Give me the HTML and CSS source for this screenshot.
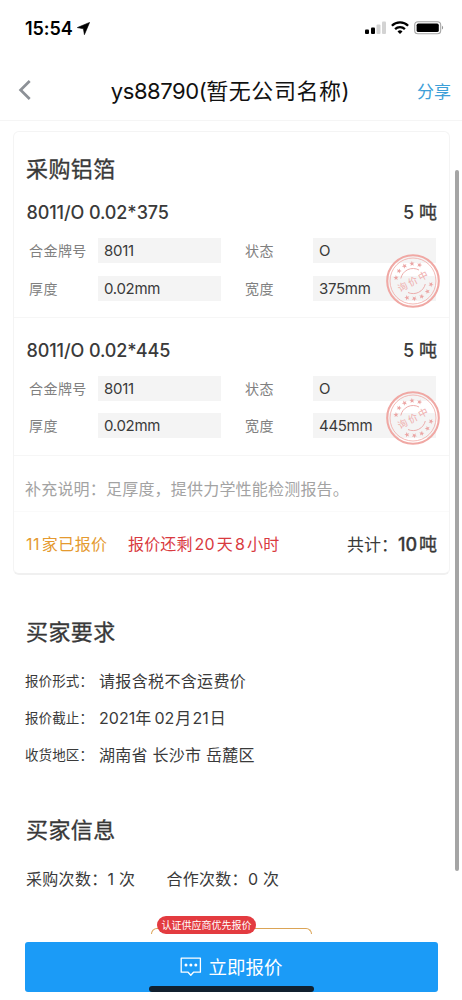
FILE: index.html
```
<!DOCTYPE html>
<html lang="zh-CN">
<head>
<meta charset="utf-8">
<title>采购铝箔</title>
<link rel="stylesheet" href="styles.css">
</head>
<body>
<svg class="defs" width="0" height="0">
  <defs>
    <path id="star" d="M0-2.7 .7-.85 2.6-.85 1.1.35 1.6 2.2 0 1.1-1.6 2.2-1.1.35-2.6-.85-.7-.85Z"/>
    <g id="stamp">
      <circle cx="27" cy="27" r="25.8" fill="none" stroke="#f0a8a4" stroke-width="2.1"/>
      <circle cx="27" cy="27" r="23" fill="none" stroke="#f0a8a4" stroke-width=".8"/>
      <g fill="#eba5a4">
        <use href="#star" transform="translate(10 23.8) rotate(-75)"/>
        <use href="#star" transform="translate(13 17) rotate(-52)"/>
        <use href="#star" transform="translate(18.5 12) rotate(-28)"/>
        <use href="#star" transform="translate(26 9.6) rotate(-5)"/>
        <use href="#star" transform="translate(33.5 11) rotate(20)"/>
        <use href="#star" transform="translate(45 30.5) rotate(100)"/>
        <use href="#star" transform="translate(41.5 37.5) rotate(125)"/>
        <use href="#star" transform="translate(35.7 42.5) rotate(150)"/>
        <use href="#star" transform="translate(28.3 44.6) rotate(175)"/>
        <use href="#star" transform="translate(21 43.7) rotate(200)"/>
      </g>
      <path d="M14.8 24.5A12.5 12.5 0 0 1 33 16M22 38.5A12.5 12.5 0 0 0 39.3 30" fill="none" stroke="#eba5a4" stroke-width=".9"/>
      <text x="27.6" y="30.8" text-anchor="middle" font-size="9.6" letter-spacing="2" fill="#efaead" transform="rotate(-28 27 27)">询价中</text>
    </g>
  </defs>
</svg>
<div class="screen">
  <header class="status">
    <span class="time">15:54</span>
    <svg class="loc" width="13" height="13" viewBox="0 0 13 13"><path d="M12.6.4.3 5.6l6.1 1.2 1 5.9Z" fill="#000" stroke="#000" stroke-width=".6" stroke-linejoin="round"/></svg>
    <svg class="signals" width="80" height="16" viewBox="0 0 80 16">
      <g fill="#000"><rect x="1" y="9.5" width="4" height="4.5" rx="1"/><rect x="7" y="7.5" width="4" height="6.5" rx="1"/></g>
      <g fill="#d3d3d3"><rect x="12.5" y="4.5" width="4" height="9.5" rx="1"/><rect x="18" y="1.5" width="4" height="12.5" rx="1"/></g>
      <g fill="none" stroke="#000" stroke-width="2.3"><path d="M27.9 5.8a11.4 11.4 0 0 1 16.2 0"/><path d="M31.1 9.1a7 7 0 0 1 9.8 0"/></g>
      <path d="M36 14l-2.5-2.6a3.7 3.7 0 0 1 5 0Z" fill="#000"/>
      <rect x="50.7" y="1.7" width="26" height="12.1" rx="3.3" fill="none" stroke="#a5a5a5" stroke-width="1.1"/>
      <rect x="52.6" y="3.5" width="22.2" height="8.6" rx="1.7" fill="#000"/>
      <path d="M78 5.8c1.5.6 1.5 3.2 0 3.8Z" fill="#999"/>
    </svg>
  </header>
  <nav class="nav">
    <svg class="back" width="14" height="22" viewBox="0 0 14 22"><path d="M11.7 2 2.6 11l9.1 9" fill="none" stroke="#8d9197" stroke-width="2.7"/></svg>
    <h1 class="nav-title"><i>ys88790(</i>暂无公司名称)</h1>
    <a class="share">分享</a>
  </nav>
  <main class="content">
    <section class="card">
      <h2 class="heading">采购铝箔</h2>
      <div class="item">
        <div class="item-head"><span>8011/O 0.02*375</span><span class="qty">5 <b>吨</b></span></div>
        <div class="fields">
          <span class="label">合金牌号</span><span class="value">8011</span><span class="label">状态</span><span class="value">O</span>
          <span class="label">厚度</span><span class="value">0.02mm</span><span class="label">宽度</span><span class="value">375mm</span>
        </div>
        <svg class="stamp" width="54" height="54" viewBox="0 0 54 54"><use href="#stamp"/></svg>
      </div>
      <div class="item">
        <div class="item-head"><span>8011/O 0.02*445</span><span class="qty">5 <b>吨</b></span></div>
        <div class="fields">
          <span class="label">合金牌号</span><span class="value">8011</span><span class="label">状态</span><span class="value">O</span>
          <span class="label">厚度</span><span class="value">0.02mm</span><span class="label">宽度</span><span class="value">445mm</span>
        </div>
        <svg class="stamp" width="54" height="54" viewBox="0 0 54 54"><use href="#stamp"/></svg>
      </div>
      <p class="remark">补充说明：足厚度，提供力学性能检测报告。</p>
      <div class="summary">
        <span class="quoted"><i>11</i>家已报价</span>
        <span class="remain">报价还剩<i class="n20">20</i>天<i class="n8">8</i>小时</span>
        <span class="total">共计：<b><i>10</i>吨</b></span>
      </div>
    </section>
    <section class="block demands">
      <h2 class="heading">买家要求</h2>
      <dl class="list">
        <dt>报价形式：</dt><dd>请报含税不含运费价</dd>
        <dt>报价截止：</dt><dd class="date">2021年<i>02</i>月<i class="day">21</i>日</dd>
        <dt>收货地区：</dt><dd class="place">湖南省 长沙市 岳麓区</dd>
      </dl>
    </section>
    <section class="block buyer">
      <h2 class="heading">买家信息</h2>
      <div class="counts"><span>采购次数：1 次</span><span>合作次数：0 次</span></div>
    </section>
    <div class="priority"><span class="pill">认证供应商优先报价</span></div>
  </main>
  <footer class="action">
    <svg width="22" height="20" viewBox="0 0 22 20"><path d="M1.2 1.2h19.2v14H13.5L10.8 18.2 8.1 15.2H1.2Z" fill="none" stroke="#fff" stroke-width="1.3" stroke-linejoin="round"/><g fill="#fff"><circle cx="6" cy="8" r="1.5"/><circle cx="10.9" cy="8" r="1.5"/><circle cx="15.8" cy="8" r="1.5"/></g></svg>
    <span>立即报价</span>
    <div class="home"></div>
  </footer>
  <div class="scrollbar"></div>
</div>
</body>
</html>
```
FILE: styles.css
```
* { box-sizing: border-box; margin: 0; padding: 0; }
body { background: #fff; color: #3a3a3a; font-family: Inter, "Noto Sans CJK SC", sans-serif; font-size: 16px; }
i { font-style: normal; }
b { font-weight: inherit; }
svg { display: block; flex: none; }
.defs { position: absolute; }
.screen { position: relative; width: 462px; height: 1000px; overflow: hidden; display: flex; flex-direction: column; }
.status { height: 56px; display: flex; align-items: center; padding: 0 18px 0 25px; }
.time { font-size: 18px; font-weight: 600; color: #000; letter-spacing: -.05px; }
.loc { margin-left: 4px; }
.signals { margin-left: auto; }
.nav { height: 65px; display: flex; align-items: center; padding: 4px 11px 0 18px; border-bottom: 1px solid #f5f5f5; }
.back { width: 14px; }
.nav-title { flex: 1; text-align: center; font-size: 22px; font-weight: 400; color: #111; padding: 0 0 3px 12px; white-space: nowrap; letter-spacing: .55px; }
.nav-title i { letter-spacing: -.45px; }
.share { color: #3d9fd8; font-size: 17px; padding-top: 1px; }
.content { flex: 1; display: flex; flex-direction: column; padding: 10px 12px 0 13px; }
.card { height: 444px; border: 1px solid #f4f4f4; border-bottom: 2px solid #f0f0f0; border-radius: 6px; flex: none; }
.heading { font-size: 22px; font-weight: 400; letter-spacing: .4px; line-height: 32px; -webkit-text-stroke: .3px #333; }
.card .heading { padding: 21px 12px 0; height: 49px; }
.item { position: relative; height: 137px; border-bottom: 1px solid #f6f6f6; padding: 19px 12px 0 13px; }
.item + .item { height: 137.5px; padding-top: 20px; }
.item-head { display: flex; justify-content: space-between; font-size: 18px; line-height: 26px; height: 38px; font-weight: 500; letter-spacing: -.1px; }
.item-head > span:first-child { margin-left: -.5px; }
.item + .item .item-head { height: 37.5px; }
.qty { letter-spacing: 0; }
.qty b { -webkit-text-stroke: .3px #333; font-weight: 400; }
.fields { display: grid; grid-template-columns: 69px 147px 68px 123px; row-gap: 12.5px; margin-left: 2px; font-size: 14px; }
.label { color: #808080; line-height: 25px; letter-spacing: .45px; }
.value { background: #f4f4f4; width: 123px; height: 25px; line-height: 25px; padding-left: 6px; font-size: 15px; letter-spacing: -.3px; }
.stamp { position: absolute; right: 9px; top: 72.5px; }
.remark { height: 56px; border-bottom: 1px solid #fafafa; padding: 21px 11px 0; line-height: 24px; font-size: 16px; color: #a3a3a3; letter-spacing: .2px; white-space: nowrap; }
.summary { display: flex; align-items: center; height: 62px; padding: 0 12px 0; font-size: 16px; white-space: nowrap; }
.quoted { color: #e59a30; width: 102px; letter-spacing: .4px; }
.quoted i { margin-right: 2px; }
.remain { color: #d93a3f; letter-spacing: .15px; }
.n20, .n8 { margin: 0 2px; }
.total { margin-left: auto; font-size: 17px; }
.total b { font-size: 18px; -webkit-text-stroke: .3px #333; }
.total i { margin-right: 2px; font-weight: 500; }
.block { padding: 0 13px; flex: none; }
.demands { padding-top: 41px; height: 238px; }
.list { display: grid; grid-template-columns: 73px 1fr; grid-auto-rows: 37.2px; align-items: center; margin-top: 13.5px; font-size: 16px; letter-spacing: .35px; }
.list dt { font-size: 13.5px; white-space: nowrap; margin-left: -1px; letter-spacing: .1px; }
.date { letter-spacing: .05px; }
.date i { margin: 0 1px 0 3px; }
.date .day { margin: 0 1px; }
.place { letter-spacing: .25px; }
.buyer { height: 97px; padding-top: 1px; }
.counts { display: flex; gap: 31px; font-size: 16px; line-height: 26px; margin-top: 19.5px; letter-spacing: .3px; }
.priority { width: 161px; height: 6px; margin: 18px 0 0 138px; border: 1.3px solid #dba456; border-bottom: 0; border-radius: 6px 6px 0 0; position: relative; flex: none; }
.pill { position: absolute; left: 5px; top: -13px; width: 99px; height: 18px; border-radius: 9px; background: #e33b40; color: #fff; font-size: 10px; line-height: 18px; text-align: center; white-space: nowrap; }
.action { position: relative; height: 50px; margin: 0 24px 8px 25px; border-radius: 3px; background: #1b9bf7; color: #fff; display: flex; align-items: center; justify-content: center; gap: 6px; font-size: 18.5px; }
.action span { margin-top: -2px; }
.home { position: absolute; left: 124px; bottom: 0; width: 165px; height: 6px; border-radius: 3px; background: #10202f; }
.scrollbar { position: absolute; right: 3px; top: 170px; width: 4px; height: 701px; border-radius: 2px; background: #a5a5a5; }
```
